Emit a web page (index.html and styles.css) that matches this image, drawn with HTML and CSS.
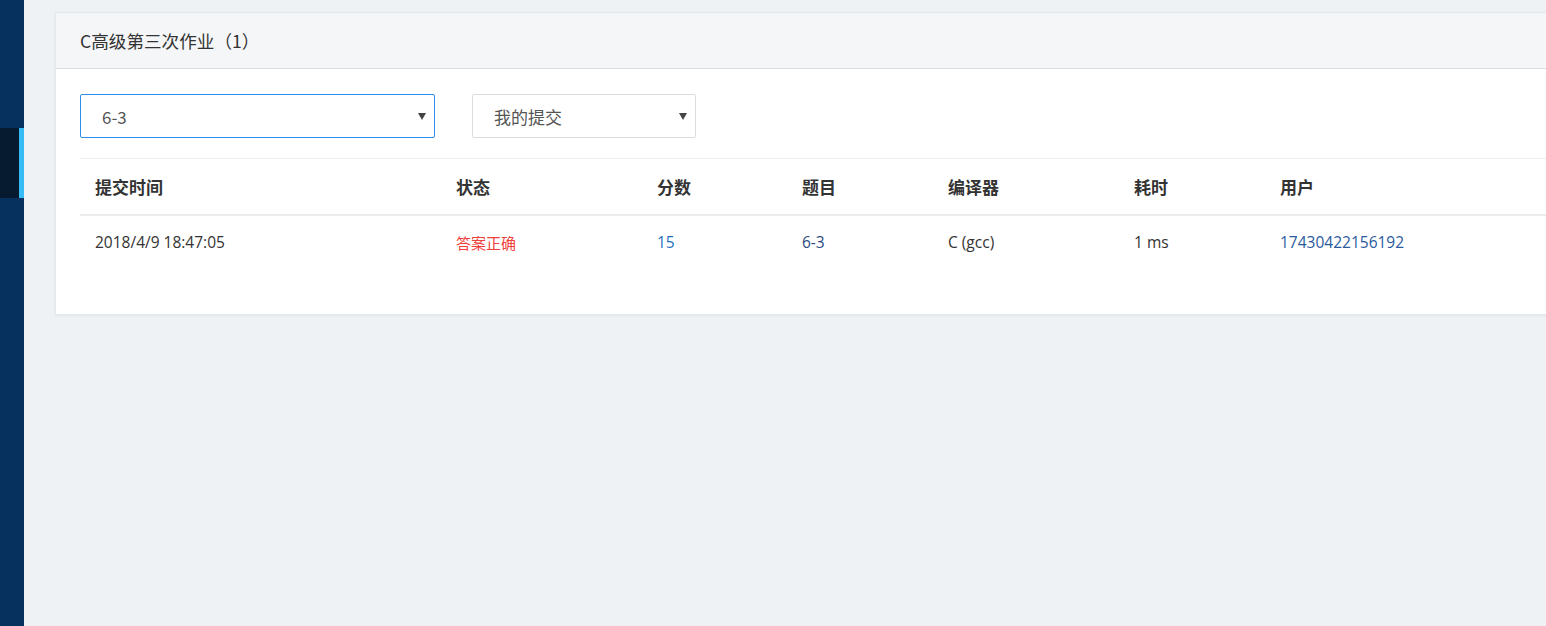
FILE: index.html
```html
<html>
<head>
	<title>提交列表</title>
	<meta charset="utf-8">
	<link rel="stylesheet" href="styles.css">
</head>
<body>
	<div class="sidebar">
		<div class="navItem"></div>
		<div class="navItem active"></div>
	</div>
	<div class="main">
		<div class="card">
			<div class="cardHeader">C高级第三次作业（1）</div>
			<div class="cardBody">
				<div class="toolbar">
					<div class="selectWrap wide focus">
						<select><option>6-3</option></select>
					</div>
					<div class="selectWrap narrow">
						<select><option>我的提交</option></select>
					</div>
				</div>
				<table class="submissions">
					<colgroup>
						<col style="width:361px">
						<col style="width:201px">
						<col style="width:145px">
						<col style="width:146px">
						<col style="width:186px">
						<col style="width:146px">
						<col>
					</colgroup>
					<thead>
						<tr>
							<th>提交时间</th>
							<th>状态</th>
							<th>分数</th>
							<th>题目</th>
							<th>编译器</th>
							<th>耗时</th>
							<th>用户</th>
						</tr>
					</thead>
					<tbody>
						<tr>
							<td>2018/4/9 18:47:05</td>
							<td class="accepted">答案正确</td>
							<td class="score">15</td>
							<td class="problem">6-3</td>
							<td>C (gcc)</td>
							<td>1 ms</td>
							<td class="user">17430422156192</td>
						</tr>
					</tbody>
				</table>
			</div>
		</div>
	</div>
</body>
</html>
```

FILE: styles.css
```css
	body {
		margin: 0;
		background-color: #eef2f5;
		color: #333;
		font-family: "Open Sans", "Noto Sans CJK SC", sans-serif;
		display: flex;
		height: 626px;
		overflow: hidden;
	}

	.sidebar {
		width: 24px;
		flex-shrink: 0;
		background-color: #06305d;
	}

	.navItem {
		height: 128px;
	}

	.navItem.active {
		height: 70px;
		background-color: #061a30;
		border-right: 5px solid #36bdf7;
		box-sizing: border-box;
	}

	.main {
		flex: 1;
		padding: 12px 0 0 31px;
		overflow: hidden;
	}

	.card {
		width: 1520px;
		background-color: #fff;
		border: 1px solid #e3e8ee;
		box-shadow: 0 1px 3px rgba(0, 0, 0, 0.05);
	}

	.cardHeader {
		height: 55px;
		line-height: 56px;
		padding: 0 24px;
		font-size: 17.6px;
		color: #333;
		background-color: #f5f6f8;
		border-bottom: 1px solid #dcdee2;
		font-family: "Noto Sans CJK SC", sans-serif;
	}

	.cardBody {
		padding: 25px 24px 45px 24px;
	}

	.toolbar {
		display: flex;
		gap: 37px;
		margin-bottom: 20px;
	}

	.selectWrap {
		position: relative;
		height: 44px;
	}

	.selectWrap.wide {
		width: 355px;
	}

	.selectWrap.narrow {
		width: 224px;
	}

	.selectWrap select {
		-webkit-appearance: none;
		appearance: none;
		width: 100%;
		height: 44px;
		border: 1px solid #dcdcdc;
		border-radius: 2px;
		background-color: #fff;
		padding: 0 21px;
		font-size: 17px;
		color: #555;
		font-family: "Noto Sans CJK SC", sans-serif;
		outline: none;
	}

	.selectWrap.focus select {
		border-color: #2d8cf0;
	}

	.selectWrap::after {
		content: "";
		position: absolute;
		right: 9px;
		top: 19px;
		border-left: 4px solid transparent;
		border-right: 4px solid transparent;
		border-top: 7px solid #444;
	}

	.submissions {
		width: 100%;
		table-layout: fixed;
		border-collapse: collapse;
		border-top: 1px solid #eee;
	}

	.submissions th {
		height: 56px;
		padding: 0 15px;
		text-align: left;
		font-size: 17px;
		font-weight: bold;
		color: #333;
		border-bottom: 2px solid #ececec;
		font-family: "Noto Sans CJK SC", sans-serif;
	}

	.submissions td {
		height: 54px;
		padding: 0 15px;
		font-size: 15.5px;
		color: #333;
	}

	td.accepted {
		color: #f0413a;
		font-size: 15px;
		font-family: "Noto Sans CJK SC", sans-serif;
	}

	td.score {
		color: #1d6fbd;
	}

	td.problem {
		color: #2b4b7e;
	}

	td.user {
		color: #2a5a9e;
	}
```
